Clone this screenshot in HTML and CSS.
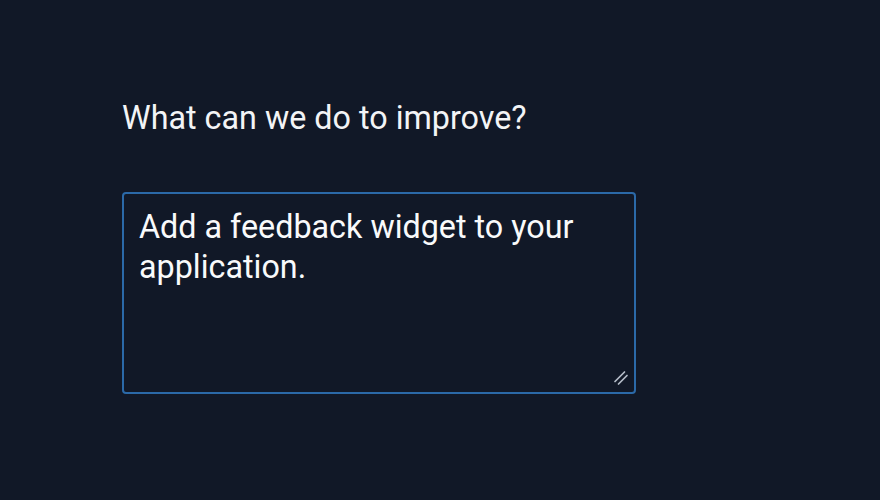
FILE: index.html
```html
<!DOCTYPE html>
<html lang="en">
<head>
<meta charset="utf-8">
<link rel="stylesheet" href="styles.css">
</head>
<body>
<main class="page">
  <form class="feedback">
    <label class="question" for="fb">What can we do to improve?</label>
    <div class="field">
      <textarea id="fb" class="answer">Add a feedback widget to your application.</textarea>
      <svg class="grip" width="16" height="16" viewBox="0 0 16 16" aria-hidden="true">
        <line x1="2" y1="11.5" x2="11.5" y2="2" />
        <line x1="5.5" y1="14" x2="14" y2="5.5" />
      </svg>
    </div>
  </form>
</main>
</body>
</html>
```
FILE: styles.css
```css
html, body {
  margin: 0;
  background: #111827;
  color-scheme: dark;
}
.page {
  padding: 98px 0 0 122px;
  font-family: Roboto, "Liberation Sans", sans-serif;
}
.feedback {
  display: flex;
  flex-direction: column;
  gap: 54px;
  width: 514px;
}
.question {
  color: #f3f4f6;
  font-size: 32.3px;
  line-height: 40px;
}
.field {
  position: relative;
  width: 514px;
  height: 202px;
}
.answer {
  box-sizing: border-box;
  display: block;
  width: 514px;
  height: 202px;
  margin: 0;
  padding: 13px 15px 11px;
  background: #111827;
  color: #f9fafb;
  border: 2px solid #2b69a8;
  border-radius: 4px;
  font-family: Roboto, "Liberation Sans", sans-serif;
  font-size: 32.3px;
  line-height: 40px;
  outline: none;
  resize: none;
}
.grip {
  position: absolute;
  right: 7px;
  bottom: 8px;
  stroke: #b4bcc8;
  stroke-width: 1.7;
  stroke-linecap: round;
}
```
